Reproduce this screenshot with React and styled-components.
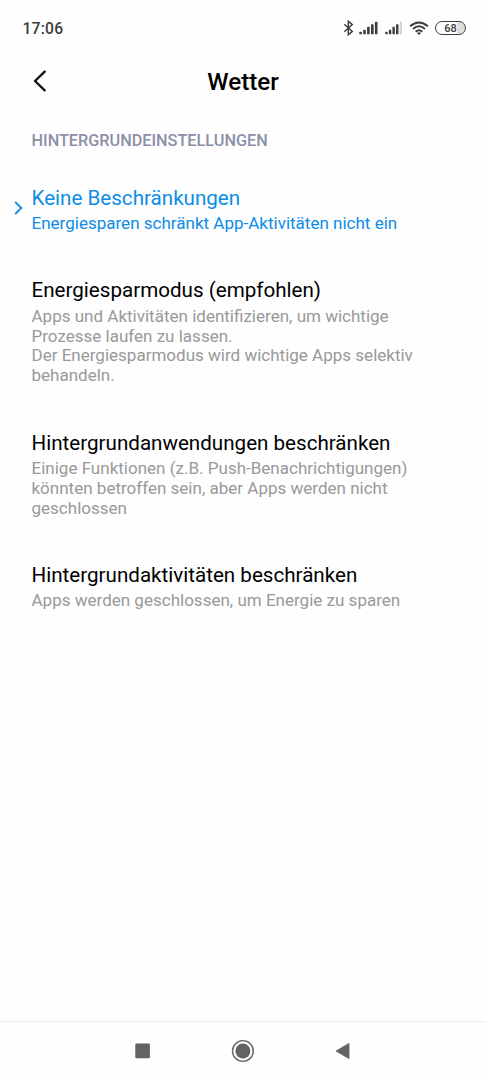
import styled, { createGlobalStyle } from 'styled-components'

const OPTIONS = [
	{
		title: 'Keine Beschränkungen',
		text: ['Energiesparen schränkt App-Aktivitäten nicht ein'],
		selected: true,
	},
	{
		title: 'Energiesparmodus (empfohlen)',
		text: [
			'Apps und Aktivitäten identifizieren, um wichtige Prozesse laufen zu lassen.',
			'Der Energiesparmodus wird wichtige Apps selektiv behandeln.',
		],
	},
	{
		title: 'Hintergrundanwendungen beschränken',
		text: [
			'Einige Funktionen (z.B. Push-Benachrichtigungen) könnten betroffen sein, aber Apps werden nicht geschlossen',
		],
	},
	{
		title: 'Hintergrundaktivitäten beschränken',
		text: ['Apps werden geschlossen, um Energie zu sparen'],
	},
]

function Bluetooth() {
	return (
		<Icon width="11" height="18" viewBox="0 0 11 18">
			<path
				d="M1.3 5.2 9.3 12.4 5.3 15.8V2.2L9.3 5.6 1.3 12.8"
				fill="none"
				stroke="#3c3c3c"
				strokeWidth="1.4"
			/>
		</Icon>
	)
}

function Signal({ bars = 5, width = 19 }) {
	return (
		<Icon width={width} height="14" viewBox="0 0 19 14" preserveAspectRatio="none">
			{[2.5, 4.5, 7.5, 10, 12.5].map((h, i) => (
				<rect
					key={h}
					x={0.3 + i * 3.9}
					y={13.3 - h}
					width="2.6"
					height={h}
					rx="0.6"
					fill={i < bars ? '#3c3c3c' : '#d4d4d4'}
				/>
			))}
		</Icon>
	)
}

function Wifi() {
	return (
		<Icon width="20" height="14" viewBox="0 0 20 14">
			<g fill="none" stroke="#3c3c3c" strokeWidth="1.9">
				<path d="M1.1 5.2Q10-2.4 18.9 5.2" />
				<path d="M4 8Q10 2.6 16 8" />
				<path d="M6.7 10.7Q10 7.6 13.3 10.7" />
			</g>
			<path d="M8 12Q10 10.6 12 12L10 13.9Z" fill="#3c3c3c" />
		</Icon>
	)
}

function App() {
	return (
		<Screen>
			<GlobalStyle />
			<StatusBar>
				<Time>17:06</Time>
				<StatusIcons>
					<Bluetooth />
					<Signal />
					<Signal bars={4} width={17.5} />
					<Wifi />
					<Battery>68</Battery>
				</StatusIcons>
			</StatusBar>
			<Header>
				<BackButton aria-label="Zurück">
					<Icon width="16" height="24" viewBox="0 0 16 24">
						<path
							d="M12.7 2.7 3 12l9.7 9.3"
							fill="none"
							stroke="#111"
							strokeWidth="2.4"
							strokeLinecap="round"
							strokeLinejoin="round"
						/>
					</Icon>
				</BackButton>
				<PageTitle>Wetter</PageTitle>
			</Header>
			<SectionLabel>HINTERGRUNDEINSTELLUNGEN</SectionLabel>
			<OptionList>
				{OPTIONS.map(({ title, text, selected }) => (
					<Option key={title} $selected={selected}>
						<Marker>
							{selected && (
								<Icon width="10" height="16" viewBox="0 0 10 16">
									<path
										d="M1.2 2 7.3 8l-6.1 6"
										fill="none"
										stroke="#0d8ce8"
										strokeWidth="1.8"
									/>
								</Icon>
							)}
						</Marker>
						<OptionBody>
							<OptionTitle>{title}</OptionTitle>
							{text.map((line) => (
								<OptionText key={line} $selected={selected}>
									{line}
								</OptionText>
							))}
						</OptionBody>
					</Option>
				))}
			</OptionList>
			<NavBar>
				<Icon width="26" height="26" viewBox="0 0 26 26">
					<rect x="5.3" y="5.6" width="14.6" height="14.6" rx="0.8" fill="#636363" />
				</Icon>
				<Icon width="26" height="26" viewBox="0 0 26 26">
					<circle cx="12.9" cy="13" r="10.4" fill="none" stroke="#636363" strokeWidth="1.4" />
					<circle cx="12.9" cy="13" r="7.5" fill="#636363" />
				</Icon>
				<Icon width="26" height="26" viewBox="0 0 26 26">
					<path
						d="M6 13 19 5.4v15.2Z"
						fill="#636363"
						stroke="#636363"
						strokeWidth="0.8"
						strokeLinejoin="round"
					/>
				</Icon>
			</NavBar>
		</Screen>
	)
}

export default App

const GlobalStyle = createGlobalStyle`
	body {
		margin: 0;
		background: #fefefe;
	}
	* {
		box-sizing: border-box;
	}
`

const Screen = styled.div`
	display: flex;
	flex-direction: column;
	width: 486px;
	height: 1080px;
	overflow: hidden;
	background: #fefefe;
	color: #000;
	font-family: Roboto, sans-serif;
`

const Icon = styled.svg`
	display: block;
	flex: none;
`

const StatusBar = styled.div`
	display: flex;
	align-items: center;
	justify-content: space-between;
	height: 57px;
	padding: 0 20px 0 22.5px;
`

const Time = styled.span`
	padding-top: 1px;
	font-size: 15.7px;
	font-weight: 500;
	letter-spacing: 0.2px;
	line-height: 20px;
	color: #3c3c3c;
`

const StatusIcons = styled.div`
	display: flex;
	align-items: center;
	gap: 6.5px;
	padding-bottom: 1px;

	svg:first-child {
		margin-right: -1px;
	}
`

const Battery = styled.span`
	display: flex;
	align-items: center;
	justify-content: center;
	width: 31px;
	height: 14px;
	border: 1.5px solid #3c3c3c;
	border-radius: 7px;
	background: linear-gradient(90deg, #fefefe 72%, #dedede 72%);
	font-size: 11px;
	font-weight: 500;
	line-height: 13px;
	color: #3c3c3c;
`

const Header = styled.header`
	display: grid;
	grid-template-columns: 60px 1fr 60px;
	align-items: center;
	height: 49px;
`

const BackButton = styled.button`
	display: flex;
	padding: 0 0 1px 32px;
	border: 0;
	background: none;
`

const PageTitle = styled.h1`
	margin: 0;
	padding-top: 1px;
	font-size: 24.2px;
	font-weight: 500;
	line-height: 30px;
	text-align: center;
`

const SectionLabel = styled.h2`
	margin: 25px 0 0 31.5px;
	font-size: 16.25px;
	font-weight: 500;
	line-height: 20px;
	color: #8b8fa8;
`

const OptionList = styled.div`
	display: flex;
	flex: 1;
	flex-direction: column;
	padding-top: 12.3px;
`

const Option = styled.div`
	display: flex;
	align-items: center;
	padding: 22.5px 60px 21.9px 0;
	color: ${({ $selected }) => ($selected ? '#0d8ce8' : '#000')};
`

const Marker = styled.div`
	display: flex;
	flex: none;
	justify-content: flex-end;
	width: 31.5px;
	padding: 0 8px 3px 0;
`

const OptionBody = styled.div`
	flex: 1;
`

const OptionTitle = styled.div`
	font-size: 20.6px;
	line-height: 24.6px;
	margin-bottom: 3.7px;
`

const OptionText = styled.div`
	font-size: 17.03px;
	line-height: 19.9px;
	color: ${({ $selected }) => ($selected ? '#0d8ce8' : '#999')};
`

const NavBar = styled.nav`
	display: flex;
	align-items: center;
	justify-content: center;
	gap: 74px;
	height: 59px;
	padding-right: 1px;
	border-top: 1px solid #eee;
`
